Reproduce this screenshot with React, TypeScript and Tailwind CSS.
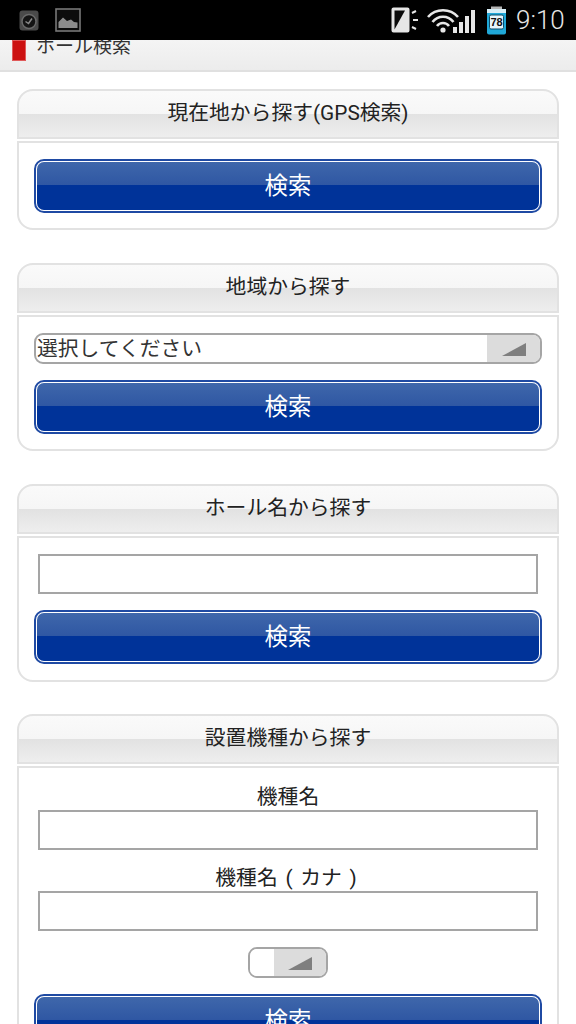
const FONT = "font-['Roboto','Noto_Sans_CJK_JP',sans-serif]";

function SearchButton() {
  return (
    <button className="relative h-[54px] w-full shrink-0 overflow-hidden rounded-[10px] border-2 border-[#1f4aa3] bg-white p-[1px]">
      <span className="flex h-full w-full flex-col overflow-hidden rounded-[7px]">
        <span className="h-[23px] w-full bg-gradient-to-b from-[#3f67ab] to-[#2f57a3]" />
        <span className="flex-1 bg-[#003399]" />
      </span>
      <span className="absolute inset-0 flex items-center justify-center pt-[2px] text-[23.4px] leading-none text-white">検索</span>
    </button>
  );
}

function Card({ title, children, className, outer = "" }: { title: string; children: React.ReactNode; className: string; outer?: string }) {
  return (
    <section className={`mx-[17px] ${outer}`}>
      <div className="relative h-[50px] overflow-hidden rounded-t-[16px] border-2 border-[#e2e2e2] bg-gradient-to-b from-[#fafafa] to-[#f2f2f2]">
        <div className="absolute inset-x-0 top-[23px] bottom-0 bg-gradient-to-b from-[#e2e2e2] to-[#eeeeee]" />
        <h2 className="relative flex h-full -translate-y-px items-center justify-center text-[20.8px] font-normal leading-none text-[#222]">{title}</h2>
      </div>
      <div className={`mt-[2px] rounded-b-[16px] border-2 border-[#e2e2e2] bg-white ${className}`}>{children}</div>
    </section>
  );
}

function TextInput() {
  return <input className="block h-[40px] w-[500px] shrink-0 border-2 border-[#a5a5a5] bg-white" />;
}

function Triangle({ className }: { className: string }) {
  return (
    <svg viewBox="0 0 24 13" className={className}>
      <path d="M0 13 L24 0 V13 Z" fill="#7f7f7f" />
    </svg>
  );
}

function StatusBar() {
  return (
    <header className="relative z-10 flex h-[40px] shrink-0 items-center bg-black pl-[19px] pr-[10px]">
      <svg viewBox="0 0 20 21" className="h-[21px] w-[20px]">
        <rect x="0.5" y="0.5" width="19" height="20" rx="3" fill="#4a4a4a" />
        <circle cx="10" cy="11.5" r="7" fill="#141414" stroke="#6a6a6a" strokeWidth="1.5" />
        <path d="M6.5 11.5 L9.5 13.5 L13 8.5" stroke="#8a8a8a" strokeWidth="1.5" fill="none" />
      </svg>
      <svg viewBox="0 0 26 24" className="ml-[16px] h-[24px] w-[26px]">
        <rect x="1" y="1" width="24" height="22" fill="#0c0c0c" stroke="#777" strokeWidth="1.6" />
        <path d="M3.5 20 V14 L8 9.5 L12 13 L16 11.5 L19 14 L22.5 14.5 V20 Z" fill="#8c8c8c" />
      </svg>
      <div className="ml-auto flex items-center">
        <svg viewBox="0 0 28 26" className="h-[26px] w-[28px]">
          <rect x="1.5" y="1.5" width="16" height="23" rx="1" fill="#e6e6e6" stroke="#e6e6e6" strokeWidth="2" />
          <path d="M3.5 3.5 H14 L3.5 22.5 Z" fill="#0c0c0c" />
          <path d="M21 6 L25 4 M22 13 H27 M21 20 L25 22" stroke="#e6e6e6" strokeWidth="2" />
        </svg>
        <svg viewBox="0 0 50 26" className="ml-[8px] h-[26px] w-[50px]">
          <path d="M1 10 C9 1 23 1 31 10 M5.5 15 C11 8 21 8 26.5 15 M10 19 C13 15 19 15 22 19" stroke="#e6e6e6" strokeWidth="2.6" fill="none" />
          <circle cx="16" cy="23" r="2.6" fill="#e6e6e6" />
          <rect x="26" y="20" width="4" height="6" fill="#e6e6e6" />
          <rect x="32" y="15" width="4" height="11" fill="#e6e6e6" />
          <rect x="38" y="9" width="4" height="17" fill="#e6e6e6" />
          <rect x="44" y="3" width="4" height="23" fill="#e6e6e6" />
        </svg>
        <svg viewBox="0 0 21 29" className="ml-[9px] h-[29px] w-[21px]">
          <rect x="5" y="0.5" width="11" height="3" fill="#b5b5b5" />
          <rect x="1" y="3" width="19" height="25.5" rx="2" fill="#20a8d8" />
          <rect x="1" y="3" width="19" height="4" fill="#d8eef6" />
          <rect x="3.5" y="9" width="14" height="14" rx="1.5" fill="#e8f6fb" stroke="#0d4e6b" />
          <text x="10.5" y="20" textAnchor="middle" fontSize="11" fontWeight="700" fill="#111" fontFamily="Liberation Sans, sans-serif">78</text>
        </svg>
        <span className="ml-[9px] w-[50px] text-[26px] font-light leading-none text-[#e6e6e6]">9:10</span>
      </div>
    </header>
  );
}

export default function App() {
  return (
    <div className={`flex h-[1024px] w-[576px] flex-col overflow-hidden bg-white ${FONT}`}>
      <StatusBar />
      <div className="relative flex h-[32px] shrink-0 items-start border-b-2 border-[#e0e0e0] bg-gradient-to-b from-[#f4f4f4] to-[#ececec] pl-[12px]">
        <span className="h-[21px] w-[14px] border border-[#e05a5a] bg-[#cc1111]" />
        <span className="ml-[10px] -mt-[3px] text-[19px] leading-[19px] text-[#333]">ホール検索</span>
      </div>
      <main className="flex flex-col gap-[33px] pt-[17px]">
        <Card title="現在地から探す(GPS検索)" className="flex h-[89px] flex-col px-[15px] pt-[16px]">
          <SearchButton />
        </Card>
        <Card title="地域から探す" className="flex h-[136px] flex-col px-[15px] pt-[16px]">
          <div className="flex h-[31px] shrink-0 overflow-hidden rounded-[9px] border-2 border-[#a5a5a5]">
            <span className="flex-1 pl-[1px] text-[20.8px] leading-[29px] text-[#333]">選択してください</span>
            <span className="flex w-[53px] items-end justify-center bg-[#dcdcdc] pb-[6px]">
              <Triangle className="h-[13px] w-[24px]" />
            </span>
          </div>
          <div className="mt-[16px]"><SearchButton /></div>
        </Card>
        <Card title="ホール名から探す" className="flex h-[146px] flex-col items-center px-[15px] pt-[16px]">
          <TextInput />
          <div className="mt-[16px] w-full"><SearchButton /></div>
        </Card>
        <Card title="設置機種から探す" outer="-mt-px" className="flex h-[320px] flex-col items-center px-[15px] pt-[15px]">
          <label className="translate-y-px text-[20.8px] leading-[27px] text-[#222]">機種名</label>
          <TextInput />
          <label className="mt-[14px] -translate-x-[2px] translate-y-px text-[20.8px] leading-[27px] text-[#222] [word-spacing:2.5px]">機種名 ( カナ )</label>
          <TextInput />
          <div className="mt-[16px] flex h-[31px] w-[80px] shrink-0 overflow-hidden rounded-[9px] border-2 border-[#a5a5a5]">
            <span className="w-[24px] bg-white" />
            <span className="flex flex-1 items-end justify-center bg-[#dcdcdc] pb-[6px]">
              <Triangle className="h-[13px] w-[24px]" />
            </span>
          </div>
          <div className="mt-[16px] w-full"><SearchButton /></div>
        </Card>
      </main>
    </div>
  );
}
